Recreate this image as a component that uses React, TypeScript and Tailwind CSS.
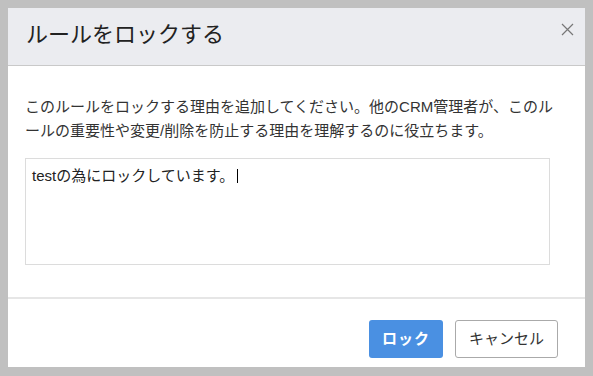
import React from "react";

export default function App() {
  const font = { fontFamily: '"Liberation Sans", "Noto Sans CJK JP", sans-serif' };
  return (
    <div
      className="w-[593px] h-[376px] bg-[#c0c0c0] pt-[8px] pl-[8px] pr-[8px] pb-[9px] text-[#333]"
      style={font}
    >
      <div className="w-[577px] h-[359px] bg-white flex flex-col">
        <div className="h-[58px] shrink-0 bg-[#ebecf0] border-b border-[#c9c9c9] flex items-center justify-between pl-[18px] pr-[11px]">
          <h1 className="text-[22px] leading-none text-[#222] mt-[-4px]">ルールをロックする</h1>
          <svg width="13" height="13" viewBox="0 0 13 13" className="mt-[-14px]">
            <path d="M1 1 L12 12 M12 1 L1 12" stroke="#777" strokeWidth="1.2" />
          </svg>
        </div>
        <div className="flex-1 px-[17px] pt-[29px]">
          <p className="text-[15px] leading-[24px] text-[#333] whitespace-nowrap">
            このルールをロックする理由を追加してください。他のCRM管理者が、このル
            <br />
            ールの重要性や変更/削除を防止する理由を理解するのに役立ちます。
          </p>
          <div className="mt-[15px] w-[525px] h-[107px] border border-[#dcdcdc] pl-[6px] pt-[6px]">
            <div className="flex items-center text-[15px] leading-[22px] text-[#222]">
              <span>testの為にロックしています。</span>
              <span className="inline-block w-px h-[14px] bg-black ml-[3px]" />
            </div>
          </div>
        </div>
        <div className="h-[70px] shrink-0 border-t-2 border-[#e6e6e6] flex justify-end items-start pt-[21px] pr-[27px] gap-[12px]">
          <button className="w-[74px] h-[38px] rounded-[3px] bg-[#4a90e2] text-white text-[15px] font-bold tracking-[1px]">
            ロック
          </button>
          <button className="w-[103px] h-[38px] rounded-[3px] bg-white border border-[#aaa] text-[#333] text-[15px]">
            キャンセル
          </button>
        </div>
      </div>
    </div>
  );
}
